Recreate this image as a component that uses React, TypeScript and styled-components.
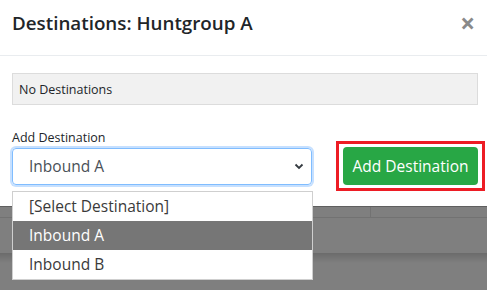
import styled, { createGlobalStyle } from 'styled-components';

const Global = createGlobalStyle`
  html, body {
    margin: 0;
    padding: 0;
    background: #7f7f7f;
    font-family: "Open Sans", "Noto Sans", sans-serif;
    color: #212529;
  }
`;

const Page = styled.div`
  width: 487px;
  height: 290px;
  overflow: hidden;
  position: relative;
`;

const Modal = styled.div`
  background: #fff;
  height: 206px;
  border-bottom: 1px solid #5f5f5f;
  position: relative;
  z-index: 2;
`;

const Header = styled.div`
  height: 55px;
  display: flex;
  align-items: center;
  justify-content: space-between;
  padding: 0 12px;
  border-bottom: 1px solid #e9ecef;
`;

const Title = styled.h4`
  margin: 0 0 9px 0;
  font-size: 18.8px;
  font-weight: 600;
  color: #212529;
`;

const Close = styled.span`
  font-size: 26px;
  font-weight: 700;
  color: #8a8a8a;
  line-height: 1;
  margin: 0 0 10px 0;
`;

const Body = styled.div`
  padding: 17px 9px 0 12px;
`;

const Alert = styled.div`
  height: 30px;
  background: #f1f1f1;
  border: 1px solid #dcdcdc;
  display: flex;
  align-items: center;
  padding-left: 6px;
  font-size: 12.5px;
`;

const Label = styled.div`
  margin-top: 25px;
  font-size: 12.5px;
  line-height: 16px;
`;

const Row = styled.div`
  display: flex;
  align-items: center;
  margin-top: -5px;
`;

const SelectWrap = styled.div`
  position: relative;
`;

const Select = styled.div`
  width: 300px;
  height: 37px;
  box-sizing: border-box;
  border: 1px solid #80bdff;
  box-shadow: 0 0 0 2px #c6e0ff;
  border-radius: 4px;
  display: flex;
  align-items: center;
  justify-content: space-between;
  padding: 0 6px 0 16px;
  font-size: 15.5px;
  color: #495057;
`;

const Options = styled.ul`
  position: absolute;
  left: 0;
  top: 43px;
  width: 301px;
  box-sizing: border-box;
  margin: 0;
  padding: 0;
  list-style: none;
  background: #fff;
  border: 1px solid #cfcfcf;
  z-index: 5;
`;

const Option = styled.li<{ $active?: boolean }>`
  height: 29px;
  display: flex;
  align-items: center;
  padding-left: 16px;
  font-size: 15.5px;
  background: ${p => (p.$active ? '#767676' : '#fff')};
  color: ${p => (p.$active ? '#fff' : '#3a3a3a')};
`;

const Highlight = styled.div`
  margin-left: 24px;
  border: 3px solid #ed1c24;
  padding: 3px 4px;
`;

const Button = styled.button`
  display: block;
  width: 135px;
  height: 38px;
  border: none;
  border-radius: 4px;
  background: #28a745;
  color: #fff;
  font-family: inherit;
  font-size: 15.5px;
`;

const Backdrop = styled.div`
  height: 83px;
`;

const TableRow = styled.div`
  height: 10px;
  border-bottom: 1px solid #727272;
  display: flex;
`;

const Cell = styled.div<{ $w: number }>`
  width: ${p => p.$w}px;
  border-right: 1px solid #727272;
`;

const Shadow = styled.div`
  margin-top: 35px;
  height: 10px;
  background: linear-gradient(#6b6b6b, #7f7f7f);
`;

const Chevron = () => (
  <svg width="12" height="12" viewBox="0 0 12 12">
    <path d="M2.5 4.5 L6 8 L9.5 4.5" fill="none" stroke="#343a40" strokeWidth="1.8" />
  </svg>
);

export default function App() {
  return (
    <Page>
      <Global />
      <Modal>
        <Header>
          <Title>Destinations: Huntgroup A</Title>
          <Close>×</Close>
        </Header>
        <Body>
          <Alert>No Destinations</Alert>
          <Label>Add Destination</Label>
          <Row>
            <SelectWrap>
              <Select>
                <span>Inbound A</span>
                <Chevron />
              </Select>
              <Options>
                <Option>[Select Destination]</Option>
                <Option $active>Inbound A</Option>
                <Option>Inbound B</Option>
              </Options>
            </SelectWrap>
            <Highlight>
              <Button>Add Destination</Button>
            </Highlight>
          </Row>
        </Body>
      </Modal>
      <Backdrop>
        <TableRow>
          <Cell $w={370} />
        </TableRow>
        <Shadow />
      </Backdrop>
    </Page>
  );
}
